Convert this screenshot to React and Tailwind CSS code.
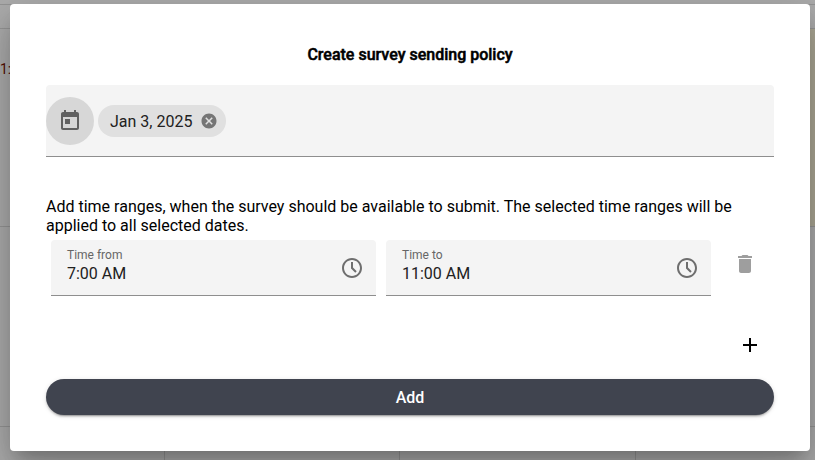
import { useState } from "react";
import { MdCancel, MdDelete, MdAdd } from "react-icons/md";

function ClockIcon() {
  return (
    <svg viewBox="0 0 24 24" className="size-6 fill-current" aria-hidden="true">
      <path d="M12 2C6.489 2 2 6.489 2 12s4.489 10 10 10 10-4.489 10-10S17.511 2 12 2zm0 2c4.43 0 8 3.57 8 8s-3.57 8-8 8-8-3.57-8-8 3.57-8 8-8zm-1 2v6.414l4.293 4.293 1.414-1.414L13 11.586V6h-2z" />
    </svg>
  );
}

function TodayIcon() {
  return (
    <svg viewBox="0 0 24 24" className="size-6 fill-current" aria-hidden="true">
      <path d="M19 3h-1V1h-2v2H8V1H6v2H5c-1.11 0-1.99.9-1.99 2L3 19c0 1.1.89 2 2 2h14c1.1 0 2-.9 2-2V5c0-1.1-.9-2-2-2zm0 16H5V8h14v11zM7 10h5v5H7z" />
    </svg>
  );
}

function TimeField({ id, label, initial }) {
  const [value, setValue] = useState(initial);
  return (
    <div className="flex h-14 min-w-0 flex-1 items-center rounded-t border-b border-[#8e8e8e] bg-[#f4f4f4] pr-3 pl-4">
      <div className="flex min-w-0 flex-1 flex-col gap-0.5 pb-1">
        <label htmlFor={id} className="text-xs leading-[14px] text-[#666666]">
          {label}
        </label>
        <input
          id={id}
          type="text"
          value={value}
          onChange={(e) => setValue(e.target.value)}
          className="h-5 w-full bg-transparent text-base leading-5 text-[#212121] outline-none"
        />
      </div>
      <button type="button" aria-label={`Pick ${label}`} className="text-[#6e6e6e]">
        <ClockIcon />
      </button>
    </div>
  );
}

function CalendarBackdrop() {
  return (
    <div aria-hidden="true" className="absolute inset-0 flex flex-col overflow-hidden bg-white">
      <div className="h-[5px] border-b border-[#ddd]" />
      <div className="h-6 border-b border-[#ddd]" />
      <div className="flex h-[198px] border-b border-[#ddd]">
        <div className="flex-1 pt-[30px] text-sm leading-5 text-[#7a1500]">1:00</div>
        <div className="w-40 bg-[#fffadf]" />
      </div>
      <div className="h-[200px] border-b border-[#ddd]" />
      <div className="grid flex-1 grid-cols-[165px_235px_236px_1fr]">
        <div className="border-r border-[#ddd]" />
        <div className="border-r border-[#ddd]" />
        <div className="border-r border-[#ddd]" />
        <div />
      </div>
      <div className="absolute inset-0 bg-black/32" />
    </div>
  );
}

export default function App() {
  return (
    <div className="relative min-h-screen font-[Roboto,sans-serif] text-base text-black">
      <CalendarBackdrop />
      <div className="relative pt-1 pr-[5px] pb-[9px] pl-[10px]">
        <section
          role="dialog"
          aria-labelledby="dialog-title"
          className="flex flex-col rounded bg-white p-9 shadow-[0_11px_15px_-7px_rgba(0,0,0,0.2),0_24px_38px_3px_rgba(0,0,0,0.14),0_9px_46px_8px_rgba(0,0,0,0.12)]"
        >
          <h1
            id="dialog-title"
            className="pt-1 text-center text-base leading-[22px] font-medium [-webkit-text-stroke:0.5px_black]"
          >
            Create survey sending policy
          </h1>

          <div className="mt-[19px] flex h-[72px] items-center gap-1 rounded-t border-b border-[#8e8e8e] bg-[#f4f4f4]">
            <button
              type="button"
              aria-label="Open calendar"
              className="flex size-12 items-center justify-center rounded-full bg-[#d7d7d7] text-[#616161]"
            >
              <TodayIcon />
            </button>
            <div className="flex h-8 items-center gap-2 rounded-full bg-[#e0e0e0] pr-2 pl-3 text-[#212121]">
              <span className="pt-0.5">Jan 3, 2025</span>
              <button type="button" aria-label="Remove Jan 3, 2025" className="text-[#757575]">
                <MdCancel className="size-[18px]" />
              </button>
            </div>
          </div>

          <p className="mt-10 leading-[19px]">
            Add time ranges, when the survey should be available to submit. The selected time ranges
            will be applied to all selected dates.
          </p>

          <div className="mt-[5px] flex gap-[10px] pl-[5px]">
            <TimeField id="time-from" label="Time from" initial="7:00 AM" />
            <TimeField id="time-to" label="Time to" initial="11:00 AM" />
            <div className="pr-[5px]">
              <button
                type="button"
                aria-label="Delete time range"
                className="flex size-12 items-center justify-center text-[#9e9e9e]"
              >
                <MdDelete className="size-6" />
              </button>
            </div>
          </div>

          <button
            type="button"
            aria-label="Add time range"
            className="mt-[25px] flex size-12 items-center justify-center self-end text-black"
          >
            <MdAdd className="size-6" />
          </button>

          <button
            type="button"
            className="mt-[10px] h-9 rounded-full bg-[#40444f] pt-px font-medium text-white shadow-[0_3px_1px_-2px_rgba(0,0,0,0.2),0_2px_2px_0_rgba(0,0,0,0.14),0_1px_5px_0_rgba(0,0,0,0.12)]"
          >
            Add
          </button>
        </section>
      </div>
    </div>
  );
}
